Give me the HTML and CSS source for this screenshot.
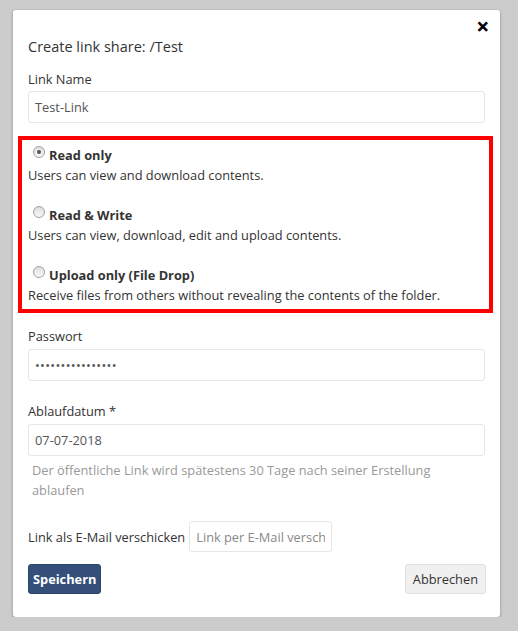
FILE: index.html
```html
<!DOCTYPE html>
<html>
<head>
<meta charset="utf-8">
<link rel="stylesheet" href="styles.css">
</head>
<body>
<div class="modal">
  <div class="modal-top"><span class="close">&#x2715;</span></div>
  <h4 class="title">Create link share: /Test</h4>
  <label class="label">Link Name</label>
  <input class="field" type="text" value="Test-Link">
  <div class="perm-box">
    <div class="option">
      <div class="radio-line"><span class="radio checked"></span><span class="opt-name">Read only</span></div>
      <div class="opt-desc">Users can view and download contents.</div>
    </div>
    <div class="option">
      <div class="radio-line"><span class="radio"></span><span class="opt-name">Read &amp; Write</span></div>
      <div class="opt-desc">Users can view, download, edit and upload contents.</div>
    </div>
    <div class="option">
      <div class="radio-line"><span class="radio"></span><span class="opt-name">Upload only (File Drop)</span></div>
      <div class="opt-desc">Receive files from others without revealing the contents of the folder.</div>
    </div>
  </div>
  <label class="label sec">Passwort</label>
  <input class="field pw" type="password" value="abcdefghijklmnop">
  <label class="label sec2">Ablaufdatum *</label>
  <input class="field" type="text" value="07-07-2018">
  <p class="help">Der öffentliche Link wird spätestens 30 Tage nach seiner Erstellung ablaufen</p>
  <div class="mail-row">
    <span class="mail-label">Link als E-Mail verschicken</span>
    <input class="field mail" type="text" placeholder="Link per E-Mail verschicken">
  </div>
  <div class="buttons">
    <button class="btn primary">Speichern</button>
    <button class="btn">Abbrechen</button>
  </div>
</div>
</body>
</html>
```

FILE: styles.css
```css
html, body {
  margin: 0;
  padding: 0;
  background: #cccccc;
  font-family: "Open Sans", "Liberation Sans", sans-serif;
  font-size: 12.8px;
  color: #333;
}
.modal {
  margin: 10px 0 0 13px;
  width: 487px;
  box-sizing: border-box;
  background: #fff;
  border-radius: 3px;
  box-shadow: 0 1px 3px rgba(0,0,0,0.35);
  padding: 0 15px 23px;
}
.modal-top {
  height: 27px;
  display: flex;
  justify-content: flex-end;
  align-items: flex-end;
}
.close {
  font-size: 15px;
  font-weight: bold;
  line-height: 20px;
  color: #000;
  margin-right: -4px;
  font-family: "DejaVu Sans", sans-serif;
  -webkit-text-stroke: 1px #000;
}
.title {
  margin: 0;
  font-size: 14.5px;
  font-weight: normal;
  line-height: 20px;
  color: #333;
}
.label {
  display: block;
  line-height: 20px;
  margin-top: 12px;
  margin-bottom: 2px;
  color: #333;
}
.field {
  display: block;
  width: 100%;
  box-sizing: border-box;
  height: 32px;
  border: 1px solid #e6e6e6;
  border-radius: 3px;
  padding: 0 6px;
  font-family: inherit;
  font-size: 12.8px;
  color: #555;
  background: #fff;
  outline: none;
}
.field::placeholder {
  color: #888;
}
.field.pw {
  letter-spacing: 0.3px;
}
.perm-box {
  margin: 13px -8px 0 -10px;
  border: 4px solid #ff0000;
  padding: 5px 3px 4px 6px;
}
.option + .option {
  margin-top: 20px;
}
.radio-line {
  display: flex;
  align-items: center;
  line-height: 20px;
  height: 20px;
}
.radio {
  width: 12px;
  height: 12px;
  box-sizing: border-box;
  border-radius: 50%;
  border: 1px solid #a0a0a0;
  background: linear-gradient(#dedede, #f8f8f8);
  margin: 0 4px 0 5px;
  position: relative;
  top: -3px;
}
.radio.checked::after {
  content: "";
  position: absolute;
  left: 3px;
  top: 3px;
  width: 4px;
  height: 4px;
  border-radius: 50%;
  background: #555;
}
.opt-name {
  font-weight: bold;
  color: #333;
}
.opt-desc {
  line-height: 20px;
}
.label.sec {
  margin-top: 13px;
  margin-bottom: 3px;
}
.label.sec2 {
  margin-top: 20px;
  margin-bottom: 3px;
}
.help {
  margin: 4px 0 0;
  padding-left: 4px;
  color: #999;
  line-height: 20px;
}
.mail-row {
  display: flex;
  align-items: center;
  margin-top: 21px;
  gap: 4px;
}
.mail-label {
  color: #333;
}
.field.mail {
  width: 143px;
  height: 31px;
  display: inline-block;
  padding: 0 6px;
}
.buttons {
  display: flex;
  justify-content: space-between;
  margin-top: 12px;
}
.btn {
  height: 30px;
  font-family: inherit;
  font-size: 12.8px;
  border: 1px solid #e0e0e0;
  border-radius: 3px;
  background: #f0f0f0;
  color: #333;
  padding: 0 7px;
  margin-right: -1px;
  cursor: pointer;
}
.btn.primary {
  background: #34507a;
  border-color: #2c4568;
  color: #fff;
  font-weight: bold;
  padding: 0 4px;
  margin-right: 0;
}
```
